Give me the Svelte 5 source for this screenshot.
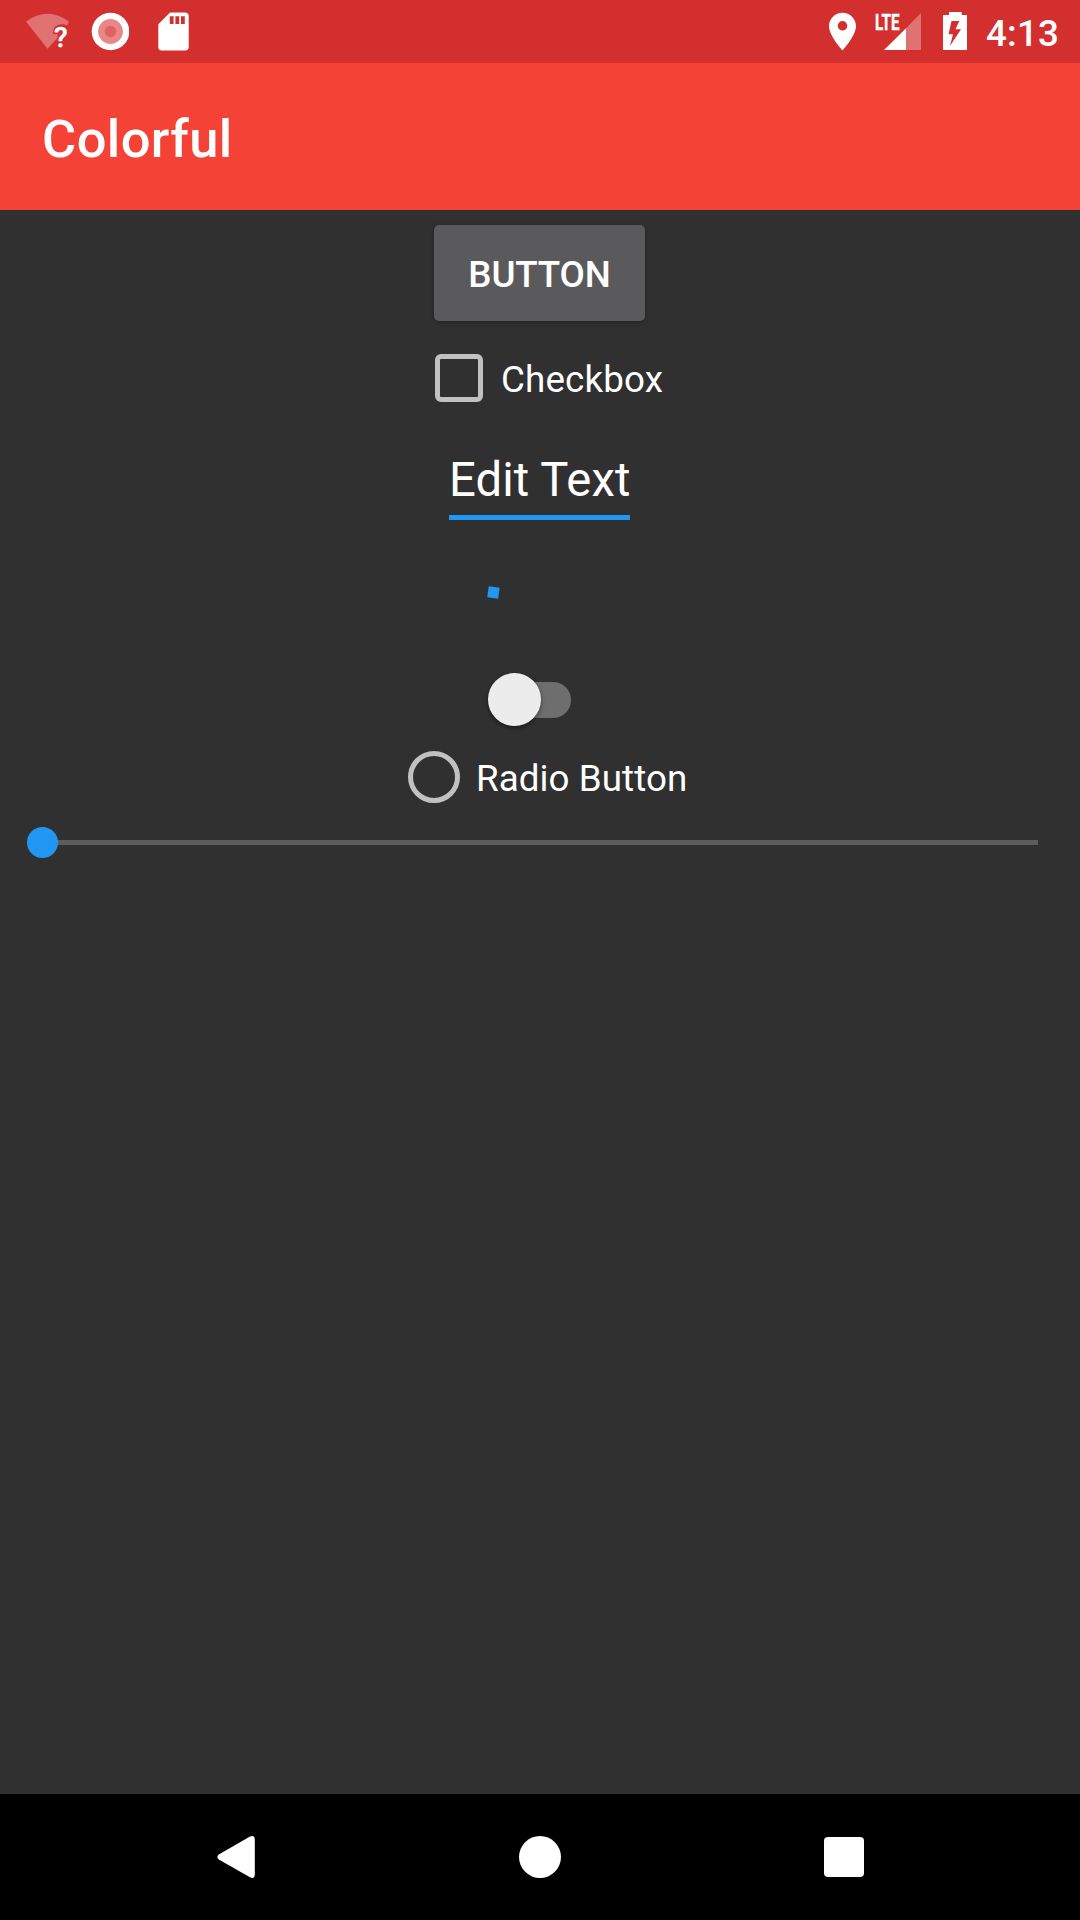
<script>
  let checked = $state(false);
  let radio = $state(false);
  let on = $state(false);
</script>

<div class="screen">
  <header class="status">
    <svg class="wifi" width="44" height="63" viewBox="26 0 44 63">
      <path d="M26 21.5Q47.5 6 69 21.5L67 25.5Q61 22.5 55 26.5Q53 29 53 34H57.5V38L47.5 48.7Z" fill="#e17272" />
      <text x="53.9" y="47" class="question">?</text>
    </svg>
    <svg class="record" width="38" height="63" viewBox="91 0 38 63">
      <circle cx="110.5" cy="31.5" r="18.8" fill="#fff" />
      <circle cx="110.5" cy="31.5" r="12.4" fill="#e88787" />
      <circle cx="110.5" cy="31.5" r="5.7" fill="#e06262" />
    </svg>
    <svg class="card" width="32" height="63" viewBox="158 0 32 63">
      <path fill="#fff" fill-rule="evenodd" d="M170 12.4H185Q188.7 12.4 188.7 16V47Q188.7 50.5 185 50.5H162Q158.3 50.5 158.3 47V24.2ZM169.8 16.3V24H173.6V16.3ZM175.4 16.3V24H179.2V16.3ZM181 16.3V24H184.8V16.3Z" />
    </svg>
    <span class="spacer"></span>
    <svg class="pin" width="28" height="63" viewBox="829 0 28 63">
      <path fill="#fff" fill-rule="evenodd" d="M842.5 12.7C835 12.7 829 18.7 829 26.1C829 36.1 842.5 50.4 842.5 50.4S856 36.1 856 26.1C856 18.7 850 12.7 842.5 12.7ZM842.5 21A4.8 4.8 0 1 1 842.5 30.6A4.8 4.8 0 1 1 842.5 21Z" />
    </svg>
    <svg class="signal" width="47" height="63" viewBox="875 0 47 63">
      <path d="M906 28.3L921 13V50H906Z" fill="#e17272" />
      <path d="M884 50L906 28.3V50Z" fill="#fff" />
      <text x="875" y="30" class="lte" textLength="24.4" lengthAdjust="spacingAndGlyphs">LTE</text>
    </svg>
    <svg class="battery" width="24" height="63" viewBox="943 0 24 63">
      <path fill="#fff" fill-rule="evenodd" d="M949 12H961.7V15H967V50H943V15H949ZM951.5 21L948.5 34.3H953L950 46L961 29.3H955.5L959.3 21Z" />
    </svg>
    <span class="clock">4:13</span>
  </header>

  <div class="appbar"><h1>Colorful</h1></div>

  <main>
    <button class="btn">BUTTON</button>
    <label class="check">
      <input type="checkbox" bind:checked />
      <span class="box"></span>
      <span>Checkbox</span>
    </label>
    <div class="edit">Edit Text</div>
    <div class="progress"><span></span></div>
    <button class="switch" aria-label="Switch" onclick={() => (on = !on)}>
      <span class="thumb"></span>
      <span class="track"></span>
    </button>
    <label class="radio">
      <input type="radio" checked={radio} />
      <span class="ring"></span>
      <span>Radio Button</span>
    </label>
    <div class="slider">
      <span class="knob"></span>
      <span class="line"></span>
    </div>
  </main>

  <nav>
    <svg class="back" width="38" height="42" viewBox="217 1836 38 42">
      <path d="M250 1836.6Q254.8 1834.5 254.8 1840V1874Q254.8 1879.5 250 1877.3L218.8 1859.5Q215.9 1857 218.8 1854.5Z" fill="#fff" />
    </svg>
    <span class="home"></span>
    <span class="recent"></span>
  </nav>
</div>

<style>
  :global(body) { background: #303030; }
  .screen {
    width: 1080px;
    height: 1920px;
    display: flex;
    flex-direction: column;
    background: #303030;
    color: #fff;
    font-family: Roboto, sans-serif;
    font-size: 36.75px;
    overflow: hidden;
  }
  .status {
    height: 63px;
    flex: none;
    display: flex;
    background: #d32f2f;
    padding: 0 22px 0 26px;
  }
  .status svg { flex: none; display: block; }
  .record { margin-left: 21px; }
  .card { margin-left: 29px; }
  .spacer { flex: 1; }
  .signal { margin-left: 18px; }
  .battery { margin-left: 21px; }
  .clock {
    width: 72px;
    margin-left: 19px;
    font-weight: 500;
    line-height: 68px;
    letter-spacing: 0.15px;
    white-space: nowrap;
  }
  .question { font: 500 28px Roboto, sans-serif; fill: #fff; stroke: #fff; stroke-width: 0.4px; }
  .lte { font: 700 22.5px Roboto, sans-serif; fill: #fff; stroke: #fff; stroke-width: 0.4px; }
  .appbar {
    height: 147px;
    flex: none;
    display: flex;
    align-items: center;
    padding: 5px 42px 0;
    box-sizing: border-box;
    background: #f44336;
  }
  h1 { margin: 0; font-size: 52.5px; font-weight: 500; line-height: 62px; letter-spacing: 0.4px; }
  main {
    flex: 1;
    display: flex;
    flex-direction: column;
    align-items: center;
    padding-top: 15px;
  }
  .btn {
    width: 211px;
    height: 96px;
    margin: 0 1px 0 0;
    padding: 2px 0 0;
    border: 0;
    border-radius: 5px;
    background: #5a5a5c;
    color: #fff;
    font: 500 36.75px Roboto, sans-serif;
    letter-spacing: -0.15px;
    box-shadow: 0 1px 4px rgba(0, 0, 0, 0.3);
  }
  input { display: none; }
  .check, .radio { display: flex; align-items: center; white-space: nowrap; }
  .check { width: 210px; height: 48px; margin-top: 33px; }
  .check span + span { line-height: 44px; padding-top: 3px; letter-spacing: 0.15px; }
  .box {
    width: 48px;
    height: 48px;
    flex: none;
    box-sizing: border-box;
    border: 5.5px solid #c1c1c1;
    border-radius: 6px;
    margin-right: 18px;
  }
  .edit {
    width: 181px;
    height: 63px;
    padding-top: 1px;
    margin: 49px 1px 0 0;
    border-bottom: 5px solid #2196f3;
    font-size: 47.25px;
    line-height: 56px;
    letter-spacing: 0.1px;
    white-space: nowrap;
  }
  .progress { width: 126px; height: 126px; display: flex; align-items: center; margin-top: 9px; }
  .progress span {
    width: 10.5px;
    height: 10.5px;
    margin-left: 10.5px;
    background: #2196f3;
    transform: rotate(8deg);
  }
  .switch {
    width: 84px;
    height: 53px;
    margin: 18px 0 0 -20px;
    padding: 0;
    border: 0;
    background: none;
    display: flex;
    align-items: center;
  }
  .thumb {
    width: 53px;
    height: 53px;
    flex: none;
    border-radius: 50%;
    background: #ececec;
    box-shadow: 0 2px 4px rgba(0, 0, 0, 0.45);
    z-index: 1;
  }
  .track {
    width: 60px;
    height: 36px;
    flex: none;
    margin: 1px 0 0 -30px;
    border-radius: 18px;
    background: #6e6e6e;
  }
  .radio { width: 280px; height: 53px; margin: 24.5px 0 0 15px; }
  .radio span + span { line-height: 44px; padding-top: 3px; letter-spacing: 0.07px; }
  .ring {
    width: 52.5px;
    height: 52.5px;
    flex: none;
    box-sizing: border-box;
    border: 5.2px solid #c1c1c1;
    border-radius: 50%;
    margin-right: 16px;
  }
  .slider {
    align-self: stretch;
    display: flex;
    align-items: center;
    height: 31px;
    margin: 23px 42px 0 27px;
  }
  .knob { width: 31px; height: 31px; flex: none; border-radius: 50%; background: #2196f3; z-index: 1; }
  .line { flex: 1; height: 5px; margin-left: -15px; background: #5c5c5c; }
  nav {
    height: 126px;
    flex: none;
    display: flex;
    align-items: center;
    background: #000;
    padding-left: 217px;
  }
  .home { width: 42px; height: 42px; margin-left: 264px; border-radius: 50%; background: #fff; }
  .recent { width: 39.5px; height: 39.5px; margin-left: 263.3px; border-radius: 4px; background: #fff; }
</style>
